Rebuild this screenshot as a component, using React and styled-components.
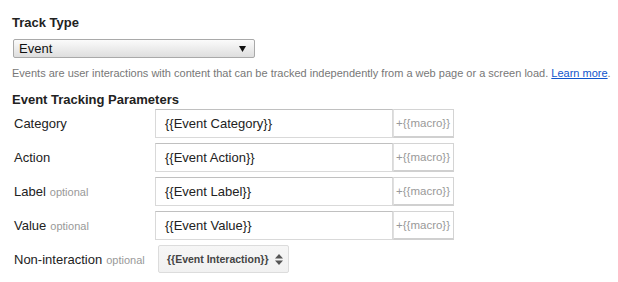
import styled, { createGlobalStyle } from 'styled-components';

const GlobalStyle = createGlobalStyle`
  body {
    margin: 0;
    background: #fff;
    font-family: "Liberation Sans", Arial, sans-serif;
    color: #222;
  }
`;

const fields = [
  { label: 'Category', value: '{{Event Category}}' },
  { label: 'Action', value: '{{Event Action}}' },
  { label: 'Label', value: '{{Event Label}}', optional: true },
  { label: 'Value', value: '{{Event Value}}', optional: true },
];

export default function App() {
  return (
    <>
      <GlobalStyle />
      <Page>
        <Heading>Track Type</Heading>
        <TypeSelect>
          <span>Event</span>
          <DownArrow width="7" height="6" viewBox="0 0 7 6">
            <path d="M0 0 L7 0 L3.5 6 Z" fill="#111" />
          </DownArrow>
        </TypeSelect>
        <Help>
          Events are user interactions with content that can be tracked
          independently from a web page or a screen load.{' '}
          <HelpLink href="#">Learn more</HelpLink>.
        </Help>
        <SubHeading>Event Tracking Parameters</SubHeading>
        <Rows>
          {fields.map((field) => (
            <Row key={field.label}>
              <Label>
                {field.label}
                {field.optional && <Optional>optional</Optional>}
              </Label>
              <InputGroup>
                <TextInput>{field.value}</TextInput>
                <Macro>+{'{{macro}}'}</Macro>
              </InputGroup>
            </Row>
          ))}
          <Row>
            <Label>
              Non-interaction
              <Optional>optional</Optional>
            </Label>
            <SmallSelect>
              <span>{'{{Event Interaction}}'}</span>
              <UpDown width="8" height="11" viewBox="0 0 8 11">
                <path d="M4 0 L8 4.5 L0 4.5 Z" fill="#555" />
                <path d="M4 11 L8 6.5 L0 6.5 Z" fill="#555" />
              </UpDown>
            </SmallSelect>
          </Row>
        </Rows>
      </Page>
    </>
  );
}

const Page = styled.div`
  padding: 15px 12px 0 12px;
  width: 594px;
`;

const Heading = styled.h3`
  margin: 0 0 9px 0;
  font-size: 13px;
  line-height: 15px;
  font-weight: bold;
  color: #222;
`;

const TypeSelect = styled.div`
  display: flex;
  align-items: center;
  justify-content: space-between;
  box-sizing: border-box;
  margin-left: 1px;
  width: 242px;
  height: 19px;
  padding: 0 8px 0 5px;
  border: 1px solid #a9a9a9;
  border-radius: 2px;
  background: linear-gradient(#fbfbfb, #dedede);
  font-size: 13px;
  color: #111;
`;

const DownArrow = styled.svg`
  display: block;
`;

const Help = styled.p`
  margin: 9px 0 12px 0;
  font-size: 11px;
  line-height: 13px;
  color: #777;
  white-space: nowrap;
`;

const HelpLink = styled.a`
  color: #1155cc;
  text-decoration: underline;
`;

const SubHeading = styled.h4`
  margin: 0 0 2px 0;
  font-size: 13px;
  line-height: 15px;
  font-weight: bold;
  color: #222;
`;

const Rows = styled.div`
  display: flex;
  flex-direction: column;
  gap: 5px;
  padding-left: 2px;
`;

const Row = styled.div`
  display: grid;
  grid-template-columns: 141px auto;
  align-items: center;
`;

const Label = styled.div`
  font-size: 13px;
  color: #222;
`;

const Optional = styled.span`
  margin-left: 4px;
  font-size: 11px;
  color: #999;
`;

const InputGroup = styled.div`
  display: flex;
  height: 29px;
`;

const TextInput = styled.div`
  box-sizing: border-box;
  width: 238px;
  height: 29px;
  padding: 0 9px;
  display: flex;
  align-items: center;
  border: 1px solid #d9d9d9;
  border-top-color: #c0c0c0;
  font-size: 13px;
  color: #222;
`;

const Macro = styled.div`
  box-sizing: border-box;
  width: 61px;
  height: 29px;
  display: flex;
  align-items: center;
  padding-left: 2px;
  border: 1px solid #d4d4d4;
  border-left: 1px solid #e0e0e0;
  border-bottom: 2px solid #d0d0d0;
  font-size: 11.5px;
  color: #999;
  white-space: nowrap;
  overflow: hidden;
`;

const SmallSelect = styled.div`
  box-sizing: border-box;
  display: flex;
  align-items: center;
  justify-content: space-between;
  gap: 5px;
  margin-left: 3px;
  width: 131px;
  height: 28px;
  padding: 0 5px 0 8px;
  border: 1px solid #dcdcdc;
  border-radius: 2px;
  background: linear-gradient(#f6f6f6, #f1f1f1);
  font-size: 10.5px;
  font-weight: bold;
  color: #444;
  white-space: nowrap;
`;

const UpDown = styled.svg`
  display: block;
  flex-shrink: 0;
`;
